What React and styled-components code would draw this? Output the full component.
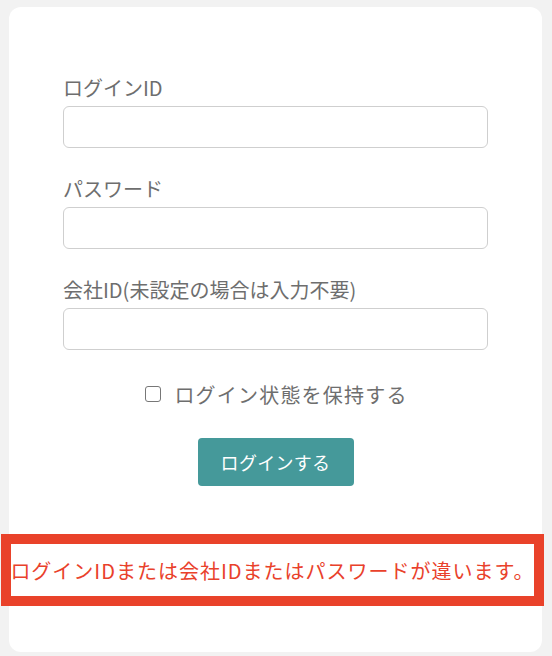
import React from 'react';
import styled, { createGlobalStyle } from 'styled-components';

const GlobalStyle = createGlobalStyle`
  html, body {
    margin: 0;
    padding: 0;
    background: #f2f2f2;
  }
  body {
    font-family: "Noto Sans CJK JP", "Noto Sans", sans-serif;
  }
`;

const Page = styled.div`
  padding: 7px 10px 4px 9px;
`;

const Card = styled.div`
  width: 533px;
  box-sizing: border-box;
  background: #fff;
  border-radius: 12px;
  padding: 67px 54px 46px;
  display: flex;
  flex-direction: column;
`;

const Group = styled.div`
  display: flex;
  flex-direction: column;
  margin-bottom: ${(p) => (p.last ? '0' : '27px')};
`;

const Label = styled.label`
  font-size: 20px;
  line-height: 28px;
  color: #6e6e6e;
  margin-bottom: 4px;
`;

const Input = styled.input`
  height: 42px;
  box-sizing: border-box;
  border: 1px solid #cfcfcf;
  border-radius: 6px;
  background: #fff;
  padding: 0 12px;
  font-size: 18px;
  outline: none;
`;

const CheckRow = styled.label`
  display: flex;
  align-items: center;
  justify-content: center;
  margin-top: 30px;
  height: 28px;
  font-size: 20px;
  letter-spacing: 1.2px;
  color: #6e6e6e;
`;

const Check = styled.input`
  appearance: none;
  width: 16px;
  height: 16px;
  margin: 0 13px 0 2px;
  border: 1.5px solid #777;
  border-radius: 3px;
  background: #fff;
  box-sizing: border-box;
`;

const Submit = styled.button`
  align-self: center;
  margin-top: 30px;
  width: 156px;
  height: 48px;
  border: none;
  border-radius: 4px;
  background: #45999a;
  color: #fff;
  font-family: inherit;
  font-size: 18px;
  letter-spacing: 0.3px;
  cursor: pointer;
`;

const Alert = styled.div`
  margin: 48px -56px 0 -62px;
  border: 10px solid #e9422a;
  height: 52px;
  display: flex;
  align-items: center;
  justify-content: center;
  color: #e9412b;
  font-size: 20px;
  letter-spacing: 1px;
  white-space: nowrap;
`;

export default function App() {
  return (
    <>
      <GlobalStyle />
      <Page>
        <Card>
          <Group>
            <Label>ログインID</Label>
            <Input type="text" />
          </Group>
          <Group>
            <Label>パスワード</Label>
            <Input type="password" />
          </Group>
          <Group last>
            <Label>会社ID(未設定の場合は入力不要)</Label>
            <Input type="text" />
          </Group>
          <CheckRow>
            <Check type="checkbox" />
            ログイン状態を保持する
          </CheckRow>
          <Submit type="button">ログインする</Submit>
          <Alert>ログインIDまたは会社IDまたはパスワードが違います。</Alert>
        </Card>
      </Page>
    </>
  );
}
